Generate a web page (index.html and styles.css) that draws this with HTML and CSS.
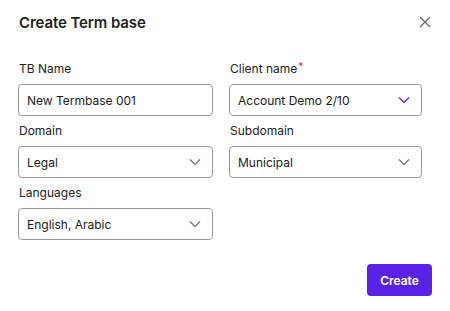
FILE: index.html
```html
<!DOCTYPE html>
<html lang="en">
<head>
  <meta charset="UTF-8">
  <title>Create Term base</title>
  <link rel="stylesheet" href="styles.css">
</head>
<body>

<div class="dialog">
  <div class="dialog-header">
    <h2>Create Term base</h2>
    <button class="close-btn" aria-label="Close">
      <svg width="12" height="12" viewBox="0 0 12 12"><path d="M1 1L11 11M11 1L1 11" stroke="#6b6b6b" stroke-width="1.3" fill="none"/></svg>
    </button>
  </div>

  <div class="form-grid">
    <div class="field">
      <label>TB Name</label>
      <div class="input">New Termbase 001</div>
    </div>
    <div class="field">
      <label>Client name<span class="req">*</span></label>
      <div class="input select">Account Demo 2/10
        <svg class="chevron purple" width="12" height="8" viewBox="0 0 12 8"><path d="M1 1.5L6 6.5L11 1.5" stroke="#6b2ee8" stroke-width="1.5" fill="none"/></svg>
      </div>
    </div>
    <div class="field">
      <label>Domain</label>
      <div class="input select">Legal
        <svg class="chevron" width="12" height="8" viewBox="0 0 12 8"><path d="M1 1.5L6 6.5L11 1.5" stroke="#777" stroke-width="1.3" fill="none"/></svg>
      </div>
    </div>
    <div class="field">
      <label>Subdomain</label>
      <div class="input select">Municipal
        <svg class="chevron" width="12" height="8" viewBox="0 0 12 8"><path d="M1 1.5L6 6.5L11 1.5" stroke="#777" stroke-width="1.3" fill="none"/></svg>
      </div>
    </div>
    <div class="field">
      <label>Languages</label>
      <div class="input select">English, Arabic
        <svg class="chevron" width="12" height="8" viewBox="0 0 12 8"><path d="M1 1.5L6 6.5L11 1.5" stroke="#777" stroke-width="1.3" fill="none"/></svg>
      </div>
    </div>
  </div>

  <div class="dialog-footer">
    <button class="create-btn">Create</button>
  </div>
</div>

</body>
</html>
```

FILE: styles.css
```css
* {
  margin: 0;
  padding: 0;
  box-sizing: border-box;
  font-family: 'Inter', 'Noto Sans', sans-serif;
}

body {
  background-color: #fff;
  color: #1c1c1c;
}

.dialog {
  padding: 10px 18px 0 18px;
}

.dialog-header {
  display: flex;
  align-items: center;
  justify-content: space-between;
  height: 24px;
}

.dialog-header h2 {
  font-size: 15px;
  font-weight: 600;
  color: #1f1f1f;
  padding-left: 1px;
  letter-spacing: -0.1px;
}

.close-btn {
  background: none;
  border: none;
  width: 12px;
  height: 12px;
  margin-right: 1px;
  display: flex;
}

.form-grid {
  display: grid;
  grid-template-columns: 195px 193px;
  column-gap: 16px;
  row-gap: 6px;
  margin-top: 26px;
}

.field label {
  display: block;
  font-size: 12px;
  line-height: 18px;
  margin-bottom: 6px;
  padding-left: 1px;
  color: #222;
}

.req {
  color: #e5245a;
  font-size: 10px;
  vertical-align: top;
  position: relative;
  top: -3px;
  margin-left: 1px;
}

.input {
  height: 32px;
  border: 1px solid #9a9a9a;
  border-radius: 4px;
  display: flex;
  align-items: center;
  justify-content: space-between;
  padding: 0 11px 0 8px;
  font-size: 12px;
  color: #1a1a1a;
}

.chevron {
  flex-shrink: 0;
}

.dialog-footer {
  display: flex;
  justify-content: flex-end;
  margin-top: 24px;
}

.create-btn {
  width: 65px;
  height: 32px;
  border: none;
  border-radius: 4px;
  background-color: #5a22e4;
  color: #fff;
  font-size: 12px;
  font-weight: 600;
}
```
